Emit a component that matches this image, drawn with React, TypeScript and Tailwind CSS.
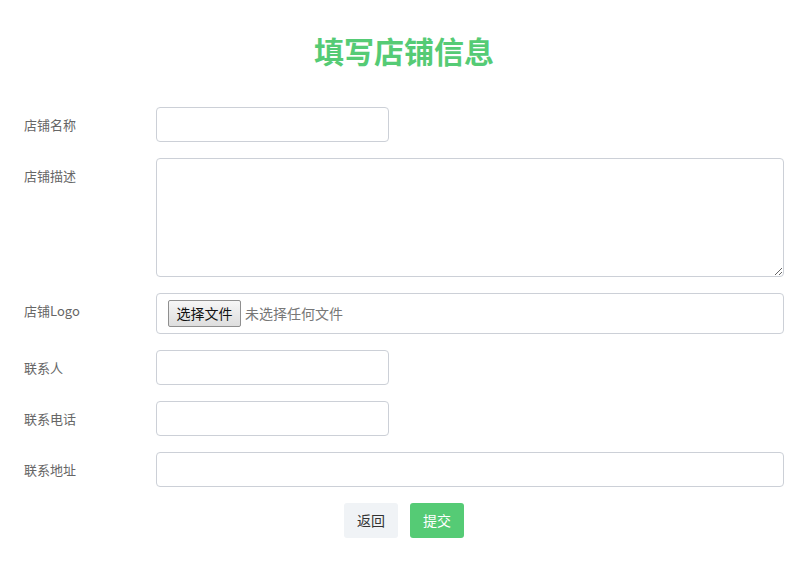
export default function App() {
  const font = { fontFamily: '"Noto Sans CJK SC", "Noto Sans", sans-serif' };

  const inputCls =
    "h-[35px] rounded-[4px] border border-[#ccd0d7] bg-white px-3 text-[14px] outline-none";

  return (
    <div className="min-h-[580px] w-[808px] bg-white px-6" style={font}>
      <h1 className="pt-[30px] text-center text-[30px] font-bold leading-[40px] text-[#55cb75]">
        填写店铺信息
      </h1>

      <form className="mt-[37px] flex flex-col gap-4" onSubmit={(e) => e.preventDefault()}>
        {/* 店铺名称 */}
        <div className="flex items-start">
          <label className="flex h-[35px] w-[132px] items-center text-[13px] text-[#666]">店铺名称</label>
          <input type="text" className={`${inputCls} w-[233px]`} />
        </div>

        {/* 店铺描述 */}
        <div className="flex items-start">
          <label className="flex h-[35px] w-[132px] items-center text-[13px] text-[#666]">店铺描述</label>
          <textarea className="h-[119px] flex-1 rounded-[4px] border border-[#ccd0d7] bg-white px-3 py-2 text-[14px] outline-none" />
        </div>

        {/* 店铺Logo */}
        <div className="flex items-start">
          <label className="flex h-[35px] w-[132px] items-center text-[13px] text-[#666]">店铺Logo</label>
          <div className="flex h-[41px] flex-1 items-center rounded-[4px] border border-[#ccd0d7] bg-white pl-[11px]">
            <span className="flex h-[27px] w-[73px] items-center justify-center rounded-[2px] border border-[#8f8f8f] bg-gradient-to-b from-[#f6f6f6] to-[#dedede] text-[14px] text-[#111]">
              选择文件
            </span>
            <span className="ml-[4px] text-[14px] text-[#777]">未选择任何文件</span>
          </div>
        </div>

        {/* 联系人 */}
        <div className="flex items-start">
          <label className="flex h-[35px] w-[132px] items-center text-[13px] text-[#666]">联系人</label>
          <input type="text" className={`${inputCls} w-[233px]`} />
        </div>

        {/* 联系电话 */}
        <div className="flex items-start">
          <label className="flex h-[35px] w-[132px] items-center text-[13px] text-[#666]">联系电话</label>
          <input type="text" className={`${inputCls} w-[233px]`} />
        </div>

        {/* 联系地址 */}
        <div className="flex items-start">
          <label className="flex h-[35px] w-[132px] items-center text-[13px] text-[#666]">联系地址</label>
          <input type="text" className={`${inputCls} flex-1`} />
        </div>

        <div className="flex justify-center gap-3">
          <button type="button" className="h-[35px] w-[54px] rounded-[3px] bg-[#f0f3f6] text-[14px] text-[#333]">
            返回
          </button>
          <button type="submit" className="h-[35px] w-[54px] rounded-[3px] bg-[#55cb75] text-[14px] text-white">
            提交
          </button>
        </div>
      </form>
    </div>
  );
}
